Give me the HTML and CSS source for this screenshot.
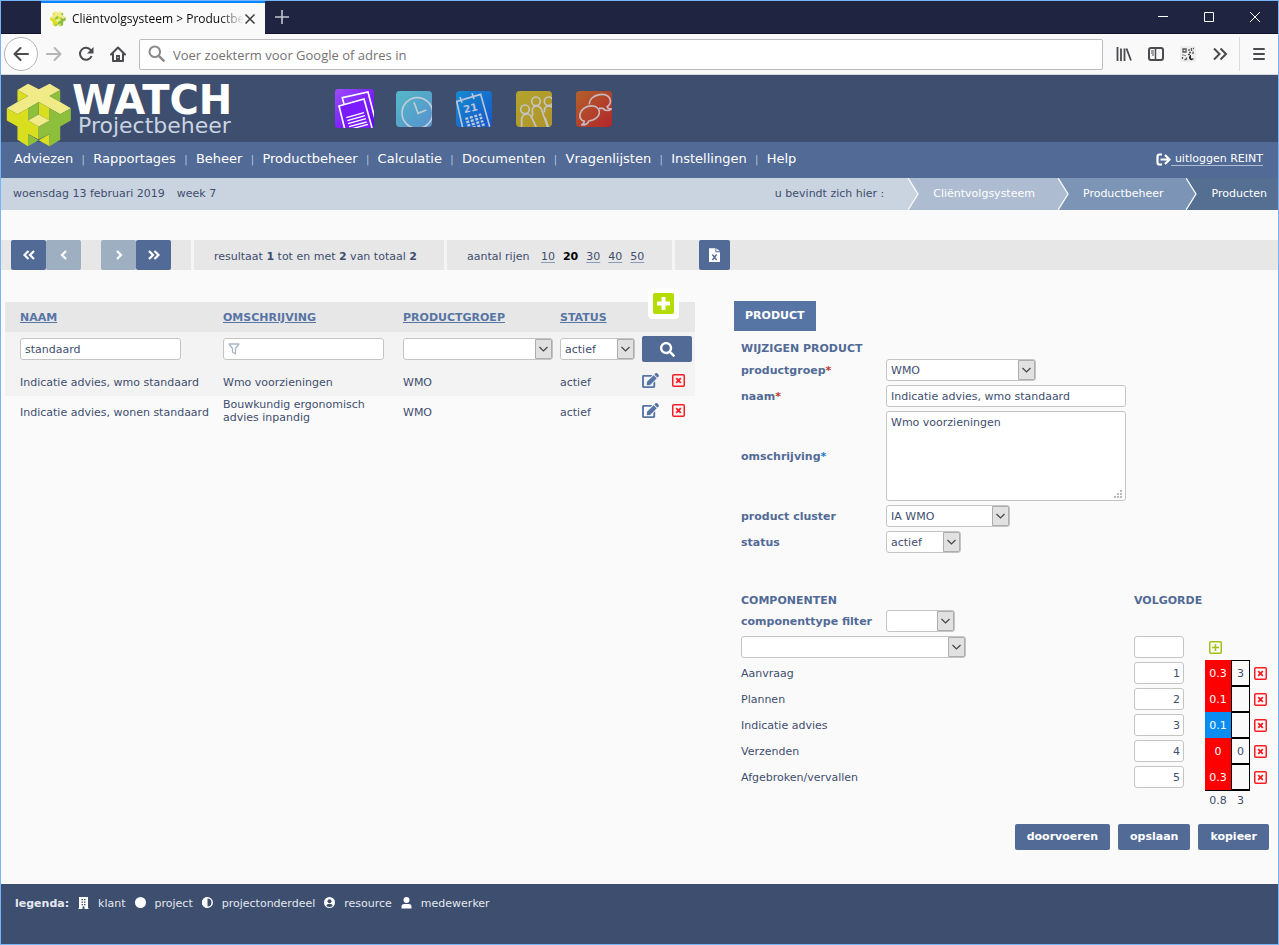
FILE: index.html
```html
<!DOCTYPE html>
<html lang="nl">
<head>
<meta charset="utf-8">
<title>Cliëntvolgsysteem &gt; Productbeheer</title>
<link rel="stylesheet" href="styles.css">
</head>
<body>
<svg class="defs" aria-hidden="true">
  <symbol id="logo" viewBox="18 249 198 196">
    <path fill="#f0eb86" d="M84 251l32.500 17L149 251l32 19-32 18 32 18 32 19-32 18-32-18-32.500-19L84 325l-32 18-32-18 32-19 32-18-32-18z"/>
    <path fill="#d9de1f" d="M52 270l32 18-32 18zM20 325l32 18 32-18v78l0 37-32-20v-40l-32-18zM116 306l33 19v37l-33-18zM84 362l32 18v39l-32-16zM116 422l33-19v37z"/>
    <path fill="#8dbf3c" d="M181 270l-32 18 32 18zM213 325l-32 18-32-18v115l32-20v-40l32-18zM116 306l-32 19v37l32-18zM149 362l-33 18v39l33-16zM116 422l-32-19v37z"/>
    <path fill="#f0eb86" d="M84 362l32-18 33 18-33 18z"/>
  </symbol>
  <symbol id="edit" viewBox="0 0 576 512"><path fill="currentColor" d="M402.600 83.200l90.200 90.200c3.800 3.800 3.800 10 0 13.800L274.400 405.600l-92.800 10.300c-12.400 1.400-22.900-9.100-21.500-21.500l10.300-92.800L388.800 83.200c3.800-3.800 10-3.800 13.800 0zm162-22.900l-48.800-48.800c-15.200-15.200-39.900-15.200-55.200 0l-35.400 35.400c-3.800 3.800-3.800 10 0 13.800l90.200 90.200c3.800 3.800 10 3.800 13.800 0l35.400-35.400c15.200-15.300 15.200-40 0-55.200zM384 346.200V448H64V128h229.800c3.200 0 6.200-1.300 8.500-3.500l40-40c7.600-7.600 2.200-20.500-8.500-20.500H48C21.500 64 0 85.500 0 112v352c0 26.500 21.500 48 48 48h352c26.500 0 48-21.500 48-48V306.200c0-10.700-12.900-16-20.500-8.500l-40 40c-2.200 2.300-3.500 5.300-3.500 8.500z"/></symbol>
  <symbol id="search" viewBox="0 0 512 512"><path fill="currentColor" d="M505 442.700L405.300 343c-4.500-4.500-10.600-7-17-7H372c27.600-35.300 44-79.700 44-128C416 93.100 322.900 0 208 0S0 93.100 0 208s93.100 208 208 208c48.300 0 92.700-16.400 128-44v16.300c0 6.400 2.500 12.500 7 17l99.700 99.700c9.400 9.400 24.600 9.400 33.900 0l28.300-28.300c9.400-9.400 9.400-24.600.1-34zM208 336c-70.700 0-128-57.200-128-128 0-70.700 57.200-128 128-128 70.700 0 128 57.200 128 128 0 70.700-57.200 128-128 128z"/></symbol>
  <symbol id="delete" viewBox="0 0 13 13"><rect x=".75" y=".75" width="11.500" height="11.500" rx="1" fill="none" stroke="currentColor" stroke-width="1.500"/><path d="M4.200 4.200l4.600 4.600M8.800 4.200l-4.600 4.600" stroke="currentColor" stroke-width="1.800"/></symbol>
</svg>

<header class="browser">
  <div class="tabs">
    <div class="tab">
      <svg class="favicon"><use href="#logo"/></svg>
      <span class="tab-title">Cliëntvolgsysteem &gt; Productbe</span>
      <button class="tab-close" aria-label="Tabblad sluiten"><svg width="12" height="12" viewBox="0 0 12 12"><path d="M1.500 1.500l9 9M10.500 1.500l-9 9" stroke="#3c3c40" stroke-width="1.500"/></svg></button>
    </div>
    <button class="tab-new" aria-label="Nieuw tabblad"><svg width="14" height="14" viewBox="0 0 14 14"><path d="M7 0v14M0 7h14" stroke="#c4c5cd" stroke-width="1.600"/></svg></button>
    <div class="window-controls">
      <button aria-label="Minimaliseren"><svg width="12" height="12" viewBox="0 0 12 12"><path d="M1 5.500h10" stroke="#fff"/></svg></button>
      <button aria-label="Maximaliseren"><svg width="12" height="12" viewBox="0 0 12 12"><path d="M1.500 1.500h9v9h-9z" fill="none" stroke="#fff"/></svg></button>
      <button aria-label="Sluiten"><svg width="12" height="12" viewBox="0 0 12 12"><path d="M1 1l10 10M11 1L1 11" stroke="#fff"/></svg></button>
    </div>
  </div>
  <div class="toolbar">
    <button class="back" aria-label="Terug"><svg width="16" height="16" viewBox="0 0 16 16"><path d="M15 8H1.500M7.500 2L1.500 8l6 6" fill="none" stroke="#4a4a4f" stroke-width="2" stroke-linecap="round" stroke-linejoin="round"/></svg></button>
    <button class="tool" aria-label="Vooruit"><svg width="16" height="16" viewBox="0 0 16 16"><path d="M1 8h13.500M8.500 2l6 6-6 6" fill="none" stroke="#b5b5b7" stroke-width="2" stroke-linecap="round" stroke-linejoin="round"/></svg></button>
    <button class="tool" aria-label="Vernieuwen"><svg width="16" height="16" viewBox="0 0 16 16"><path d="M13 4.500A6 6 0 1 0 13.600 10" fill="none" stroke="#4a4a4f" stroke-width="2"/><path d="M15.500 1v6.500H9z" fill="#4a4a4f"/></svg></button>
    <button class="tool" aria-label="Startpagina"><svg width="16" height="16" viewBox="0 0 16 16"><path d="M1 8.500L8 1.500l7 7M3 8v7h10V8" fill="none" stroke="#4a4a4f" stroke-width="2" stroke-linecap="round" stroke-linejoin="round"/><path d="M6 9h4v6H6z" fill="#4a4a4f"/><path d="M7.500 11h1v1h-1z" fill="#fff"/></svg></button>
    <label class="url">
      <svg width="18" height="18" viewBox="0 0 18 18"><circle cx="6.800" cy="6.800" r="5.300" fill="none" stroke="#8a8a8c" stroke-width="2"/><path d="M10.800 10.800l5.600 5.600" stroke="#8a8a8c" stroke-width="2.400"/></svg>
      <input class="url-input" type="text" placeholder="Voer zoekterm voor Google of adres in" aria-label="Adresbalk">
    </label>
    <button class="tool" aria-label="Bibliotheek"><svg width="16" height="16" viewBox="0 0 16 16"><path d="M1.500 1v14M5 2.500V15M8.500 2.500V15M10.500 2.500L15 14.500" stroke="#4a4a4f" stroke-width="1.800"/></svg></button>
    <button class="tool" aria-label="Zijbalk"><svg width="16" height="16" viewBox="0 0 16 16"><rect x="1" y="2" width="14" height="12" rx="2" fill="none" stroke="#4a4a4f" stroke-width="2"/><path d="M7.500 2v12" stroke="#4a4a4f" stroke-width="1.500"/><path d="M3 5h3M3 7h3M4 9h2" stroke="#4a4a4f"/></svg></button>
    <button class="tool" aria-label="QR-code"><svg width="16" height="16" viewBox="0 0 16 16"><path d="M0 0h16v16H0z" fill="#eee"/><path d="M3 3h3v3H3zM2.500 11v2M5 9v1M6.500 11.500v2M9 3v2M9 6.500h2M11.500 2v3M13 5.500V8M2.500 9h1M4.500 13.500h2M13 2.500h1M8 8.500h2" fill="none" stroke="#55555a" stroke-width="1.300"/><path d="M11 9a2.600 2.600 0 1 0 3 3.500h-3z" fill="#222"/></svg></button>
    <button class="tool" aria-label="Meer hulpmiddelen"><svg width="16" height="16" viewBox="0 0 16 16"><path d="M2 2.500L7.500 8 2 13.500M8.500 2.500L14 8l-5.500 5.500" fill="none" stroke="#4a4a4f" stroke-width="2"/></svg></button>
    <button class="tool tool-menu" aria-label="Menu"><svg width="16" height="16" viewBox="0 0 16 16"><path d="M3 3h10M3 8h10M3 13h10" stroke="#4a4a4f" stroke-width="2" stroke-linecap="round"/></svg></button>
  </div>
</header>

<header class="app-header">
  <div class="brand">
    <svg class="brand-logo"><use href="#logo"/></svg>
    <div class="brand-name">WATCH</div>
    <div class="brand-sub">Projectbeheer</div>
  </div>
  <div class="apps">
    <a href="#" class="app app-active" aria-label="Projecten"><svg viewBox="45 42 117 117"><defs><linearGradient id="g1" x2="1" y2="1"><stop offset="0" stop-color="#9b4dfb"/><stop offset=".6" stop-color="#7a1cff"/><stop offset="1" stop-color="#5d00f5"/></linearGradient><clipPath id="c1"><rect x="45" y="42" width="117" height="117" rx="10"/></clipPath></defs><g clip-path="url(#c1)"><path fill="url(#g1)" d="M45 42h117v117H45z"/><g fill="none" stroke="#fff" stroke-width="5"><path d="M72 88l-5-20 77-17 22 85"/><path fill="#7a1cff" d="M75 165L57 93l75-21 26 93"/><path stroke-width="4" d="M79 128l53-15M82 137l53-15M84 146l54-15M87 155l53-14M90 163l54-15"/></g></g></svg></a>
    <a href="#" class="app" aria-label="Uren"><svg viewBox="231 46 108 108"><defs><linearGradient id="g2" x2="1" y2="1"><stop offset="0" stop-color="#54b9c6"/><stop offset="1" stop-color="#5791cf"/></linearGradient><clipPath id="c2"><rect x="231" y="46" width="108" height="108" rx="11"/></clipPath></defs><g clip-path="url(#c2)"><path fill="url(#g2)" d="M231 46h108v108H231z"/><g fill="none" stroke="#bfcbd9" stroke-width="5"><circle cx="295" cy="112" r="46"/><path d="M285 80l12 33 25-10"/></g></g></svg></a>
    <a href="#" class="app" aria-label="Agenda"><svg viewBox="409 46 108 108"><defs><linearGradient id="g3" x2="1" y2="1"><stop offset="0" stop-color="#168bd0"/><stop offset="1" stop-color="#1556c9"/></linearGradient><clipPath id="c3"><rect x="409" y="46" width="108" height="108" rx="11"/></clipPath></defs><g clip-path="url(#c3)"><path fill="url(#g3)" d="M409 46h108v108H409z"/><g fill="none" stroke="#b9c5da" stroke-width="5"><path d="M430 160l-19-83 72-21 29 104M421 64l6 17M457 53l6 17"/><path stroke-width="7" stroke-dasharray="9 5" d="M437 130l48-14M440 140l48-14M443 150l48-14M446 160l52-15"/></g><text x="434" y="113" transform="rotate(-13 434 113)" class="app-day">21</text></g></svg></a>
    <a href="#" class="app" aria-label="Relaties"><svg viewBox="589 46 108 108"><defs><linearGradient id="g4" x2="1" y2="1"><stop offset="0" stop-color="#b3a32d"/><stop offset="1" stop-color="#b0942a"/></linearGradient><clipPath id="c4"><rect x="589" y="46" width="108" height="108" rx="11"/></clipPath></defs><g clip-path="url(#c4)"><path fill="url(#g4)" d="M589 46h108v108H589z"/><g fill="none" stroke="#c3c5c0" stroke-width="5"><circle cx="616" cy="101" r="13"/><circle cx="649" cy="77" r="13"/><circle cx="687" cy="77" r="13"/><path d="M606 160v-31q4-15 18-14 8 1 12 10l16 35M639 122l-1-20q2-11 13-11 9 0 14 9l21 60M674 110l1-12q4-8 12-7 6 0 11 4M676 126l12 34"/></g></g></svg></a>
    <a href="#" class="app" aria-label="Berichten"><svg viewBox="769 46 108 108"><defs><linearGradient id="g5" x2="1" y2="1"><stop offset="0" stop-color="#b3612a"/><stop offset="1" stop-color="#b3262b"/></linearGradient><clipPath id="c5"><rect x="769" y="46" width="108" height="108" rx="11"/></clipPath></defs><g clip-path="url(#c5)"><path fill="url(#g5)" d="M769 46h108v108H769z"/><g fill="none" stroke="#c5b9bd" stroke-width="5" stroke-linejoin="round"><path d="M809 86c-1-15 12-26 30-29 18-3 31 4 33 17 1 9-4 16-10 19 1 4 5 7 13 7-9 7-19 5-25-2l-12 0"/><path d="M786 133c-10-9-6-27 8-36 17-11 39-7 44 7 5 15-10 30-31 32-1 5-6 12-21 12 5-3 8-6 8-12-3 0-6-1-8-3z"/></g></g></svg></a>
  </div>
</header>

<nav class="menu">
  <ul class="menu-list">
    <li><a href="#">Adviezen</a></li><li><a href="#">Rapportages</a></li><li><a href="#">Beheer</a></li><li><a href="#">Productbeheer</a></li><li><a href="#">Calculatie</a></li><li><a href="#">Documenten</a></li><li><a href="#">Vragenlijsten</a></li><li><a href="#">Instellingen</a></li><li><a href="#">Help</a></li>
  </ul>
  <a href="#" class="logout"><svg width="15" height="13" viewBox="0 0 15 13"><path d="M6 1.500H3.500a2 2 0 0 0-2 2v6a2 2 0 0 0 2 2H6M4.500 6.500H13M9 2l4.500 4.500L9 11" fill="none" stroke="#fff" stroke-width="2.200"/></svg><span>&nbsp;uitloggen REINT</span></a>
</nav>

<div class="crumbs">
  <span class="today">woensdag 13 februari 2019</span><span class="week">week 7</span>
  <span class="here">u bevindt zich hier :</span>
  <a href="#" class="crumb crumb-1"><svg width="11" height="32" viewBox="0 0 11 32"><path fill="#cad4e1" d="M0 0l10 16L0 32z"/><path d="M0 0l10 16L0 32" fill="none" stroke="#fafafa" stroke-width="1.300"/></svg><span>Cliëntvolgsysteem</span></a>
  <a href="#" class="crumb crumb-2"><svg width="11" height="32" viewBox="0 0 11 32"><path fill="#adbcd0" d="M0 0l10 16L0 32z"/><path d="M0 0l10 16L0 32" fill="none" stroke="#fafafa" stroke-width="1.300"/></svg><span>Productbeheer</span></a>
  <a href="#" class="crumb crumb-3"><svg width="11" height="32" viewBox="0 0 11 32"><path fill="#7c95b6" d="M0 0l10 16L0 32z"/><path d="M0 0l10 16L0 32" fill="none" stroke="#fafafa" stroke-width="1.300"/></svg><span>Producten</span></a>
</div>

<div class="pager">
  <div class="pager-nav">
    <button class="page-btn" aria-label="Eerste"><svg width="12" height="10" viewBox="0 0 12 10"><path d="M5.500 1l-4 4 4 4M11 1L7 5l4 4" fill="none" stroke="#fff" stroke-width="2.200"/></svg></button><button class="page-btn page-btn-off" aria-label="Vorige"><svg width="12" height="10" viewBox="0 0 12 10"><path d="M8 1L4 5l4 4" fill="none" stroke="#fff" stroke-width="2.200"/></svg></button>
    <span class="pager-gap"></span>
    <button class="page-btn page-btn-off" aria-label="Volgende"><svg width="12" height="10" viewBox="0 0 12 10"><path d="M4 1l4 4-4 4" fill="none" stroke="#fff" stroke-width="2.200"/></svg></button><button class="page-btn" aria-label="Laatste"><svg width="12" height="10" viewBox="0 0 12 10"><path d="M1 1l4 4-4 4M6.500 1l4 4-4 4" fill="none" stroke="#fff" stroke-width="2.200"/></svg></button>
  </div>
  <div class="pager-part pager-result">resultaat <b>1</b> tot en met <b>2</b> van totaal <b>2</b></div>
  <div class="pager-part pager-rows">aantal rijen <a href="#">10</a><b>20</b><a href="#">30</a><a href="#">40</a><a href="#">50</a></div>
  <button class="excel" aria-label="Exporteren naar Excel"><svg width="11" height="14" viewBox="0 0 12 15"><path fill="#fff" d="M0 0h7v4.500h5V15H0zM8 0l4 3.500H8z"/><path d="M3.700 7l4.600 6M8.300 7l-4.600 6" stroke="#526a96" stroke-width="1.500"/></svg></button>
</div>

<main class="main">
  <section class="list">
    <a href="#" class="add" aria-label="Toevoegen"><svg width="21" height="21" viewBox="0 0 21 21"><rect width="21" height="21" rx="2" fill="#b4dc00"/><path d="M10.500 4v13M4 10.500h13" stroke="#fff" stroke-width="4"/></svg></a>
    <table class="products">
      <colgroup><col class="c-name"><col class="c-desc"><col class="c-group"><col class="c-status"><col></colgroup>
      <thead>
        <tr class="head"><th><a href="#">NAAM</a></th><th><a href="#">OMSCHRIJVING</a></th><th><a href="#">PRODUCTGROEP</a></th><th><a href="#">STATUS</a></th><th></th></tr>
        <tr class="filters">
          <td><input class="field w-filter" type="text" value="standaard" aria-label="Filter naam"></td>
          <td><input class="field w-filter funnel" type="text" aria-label="Filter omschrijving"></td>
          <td><select class="field w-group" aria-label="Filter productgroep"><option></option><option>WMO</option></select></td>
          <td><select class="field w-status" aria-label="Filter status"><option>actief</option></select></td>
          <td><button class="search" aria-label="Zoeken"><svg width="15" height="15"><use href="#search"/></svg></button></td>
        </tr>
      </thead>
      <tbody>
        <tr class="odd"><td>Indicatie advies, wmo standaard</td><td>Wmo voorzieningen</td><td>WMO</td><td>actief</td><td><div class="actions"><a href="#" class="edit" aria-label="Wijzigen"><svg width="17" height="15"><use href="#edit"/></svg></a><a href="#" class="delete" aria-label="Verwijderen"><svg width="13" height="13"><use href="#delete"/></svg></a></div></td></tr>
        <tr><td>Indicatie advies, wonen standaard</td><td class="wrap">Bouwkundig ergonomisch advies inpandig</td><td>WMO</td><td>actief</td><td><div class="actions"><a href="#" class="edit" aria-label="Wijzigen"><svg width="17" height="15"><use href="#edit"/></svg></a><a href="#" class="delete" aria-label="Verwijderen"><svg width="13" height="13"><use href="#delete"/></svg></a></div></td></tr>
      </tbody>
    </table>
  </section>

  <form class="detail">
    <h2 class="detail-tab">PRODUCT</h2>
    <div class="detail-body">
      <h3 class="group-title">WIJZIGEN PRODUCT</h3>
      <div class="rows">
        <label for="groep">productgroep<i class="req">*</i></label>
        <select id="groep" class="field w-group"><option>WMO</option></select>
        <label for="naam">naam<i class="req">*</i></label>
        <input id="naam" class="field w-text" type="text" value="Indicatie advies, wmo standaard">
        <label for="oms">omschrijving<i class="opt">*</i></label>
        <textarea id="oms" class="field area">Wmo voorzieningen</textarea>
        <label for="cluster">product cluster</label>
        <select id="cluster" class="field w-cluster"><option>IA WMO</option></select>
        <label for="status">status</label>
        <select id="status" class="field w-status"><option>actief</option></select>
      </div>

      <table class="components">
        <colgroup><col><col class="k-order"><col class="k-a"><col class="k-b"><col class="k-del"></colgroup>
        <thead>
          <tr class="title-row"><th>COMPONENTEN</th><th colspan="4">VOLGORDE</th></tr>
        </thead>
        <tbody>
          <tr><td colspan="5"><div class="filter-row"><label for="ctype">componenttype filter</label><select id="ctype" class="field w-type"><option></option></select></div></td></tr>
          <tr><td><select class="field w-component" aria-label="Component"><option></option></select></td><td><input class="field order" type="text" aria-label="Volgorde"></td><td colspan="3"><a href="#" class="add-small" aria-label="Component toevoegen"><svg width="13" height="13" viewBox="0 0 13 13"><rect x=".75" y=".75" width="11.500" height="11.500" rx="1" fill="none" stroke="#a2c114" stroke-width="1.500"/><path d="M6.500 3v7M3 6.500h7" stroke="#a2c114" stroke-width="1.500"/></svg></a></td></tr>
          <tr><td>Aanvraag</td><td><input class="field order" type="text" value="1" aria-label="Volgorde Aanvraag"></td><td class="hours">0.3</td><td class="count">3</td><td class="del"><a href="#" class="delete" aria-label="Verwijderen"><svg width="13" height="13"><use href="#delete"/></svg></a></td></tr>
          <tr><td>Plannen</td><td><input class="field order" type="text" value="2" aria-label="Volgorde Plannen"></td><td class="hours">0.1</td><td class="count"></td><td class="del"><a href="#" class="delete" aria-label="Verwijderen"><svg width="13" height="13"><use href="#delete"/></svg></a></td></tr>
          <tr><td>Indicatie advies</td><td><input class="field order" type="text" value="3" aria-label="Volgorde Indicatie advies"></td><td class="hours hours-blue">0.1</td><td class="count"></td><td class="del"><a href="#" class="delete" aria-label="Verwijderen"><svg width="13" height="13"><use href="#delete"/></svg></a></td></tr>
          <tr><td>Verzenden</td><td><input class="field order" type="text" value="4" aria-label="Volgorde Verzenden"></td><td class="hours">0</td><td class="count">0</td><td class="del"><a href="#" class="delete" aria-label="Verwijderen"><svg width="13" height="13"><use href="#delete"/></svg></a></td></tr>
          <tr><td>Afgebroken/vervallen</td><td><input class="field order" type="text" value="5" aria-label="Volgorde Afgebroken/vervallen"></td><td class="hours">0.3</td><td class="count"></td><td class="del"><a href="#" class="delete" aria-label="Verwijderen"><svg width="13" height="13"><use href="#delete"/></svg></a></td></tr>
        </tbody>
        <tfoot>
          <tr class="totals"><td></td><td></td><td class="sum sum-line">0.8</td><td class="sum sum-line">3</td><td></td></tr>
        </tfoot>
      </table>
      <div class="buttons"><button type="button" class="btn">doorvoeren</button><button type="button" class="btn">opslaan</button><button type="button" class="btn">kopieer</button></div>
    </div>
  </form>
</main>

<footer class="legend">
  <b>legenda:</b>
  <svg viewBox="0 0 11 12"><path fill="#fff" d="M1 0h9v11h.5v1H6.500V9.500h-2V12H.5v-1H1z"/><path fill="#3e4e6e" d="M3.500 2H5v1.300H3.500zM6 2h1.500v1.300H6zM3.500 4.500H5v1.300H3.500zM6 4.500h1.500v1.300H6zM3.500 7H5v1.300H3.500zM6 7h1.500v1.300H6z"/></svg><span>klant</span>
  <svg viewBox="0 0 11 12"><circle cx="5.500" cy="5.500" r="5.500" fill="#fff"/></svg><span>project</span>
  <svg viewBox="0 0 11 12"><circle cx="5.500" cy="5.500" r="4.700" fill="none" stroke="#fff" stroke-width="1.500"/><path fill="#fff" d="M5.500 0v11a5.500 5.500 0 0 1 0-11z"/></svg><span>projectonderdeel</span>
  <svg viewBox="0 0 11 12"><circle cx="5.500" cy="5.500" r="5.500" fill="#fff"/><circle cx="5.500" cy="4.200" r="2" fill="#3e4e6e"/><path fill="#3e4e6e" d="M2.300 9q.4-2 2-2h2.400q1.600 0 2 2-3.200 2-6.400 0z"/></svg><span>resource</span>
  <svg viewBox="0 0 11 12"><circle cx="5.500" cy="3" r="3" fill="#fff"/><path fill="#fff" d="M.5 11.500V9.800Q.5 7 3.300 7h4.400q2.800 0 2.800 2.800v1.700z"/></svg><span>medewerker</span>
</footer>
</body>
</html>
```
FILE: styles.css
```css
* { box-sizing: border-box; }

body {
  margin: 0;
  min-height: 100vh;
  display: flex;
  flex-direction: column;
  border: 1px solid #75b5f5;
  background: #fafafa;
  color: #3e4e6e;
  font: 11px/13px Verdana, "DejaVu Sans", sans-serif;
}

svg { display: block; flex: none; }
a { color: inherit; }
button { margin: 0; padding: 0; border: 0; background: none; font: inherit; color: inherit; display: flex; align-items: center; justify-content: center; flex: none; }
.defs { position: absolute; width: 0; height: 0; }

/* browser window */
.browser { font-family: "Segoe UI", "Open Sans", sans-serif; }
.tabs { display: flex; height: 33px; background: #1f2440; border-bottom: 1px solid #15112c; padding-left: 40px; }
.tab { display: flex; align-items: center; width: 224px; height: 33px; padding: 0 10px 0 9px; border-top: 2px solid #0a84ff; background: #f9f9fa; color: #0c0c0d; }
.favicon { width: 16px; height: 16px; margin-right: 6px; }
.tab-title { flex: 1; white-space: nowrap; font-size: 12px; line-height: 16px; mask-image: linear-gradient(to left, transparent, #000 24px); }
.tab-new { width: 34px; }
.window-controls { display: flex; margin-left: auto; }
.window-controls button { width: 46px; }
.toolbar { display: flex; align-items: center; height: 41px; padding-left: 3px; background: #f9f9fa; border-bottom: 1px solid #d6d6d8; }
.back { width: 34px; height: 34px; border: 1px solid #b5b5b7; border-radius: 50%; background: #fff; }
.tool { width: 32px; height: 34px; }
.tool-menu { width: 39px; margin-left: 3px; border-left: 1px solid #dcdcdd; }
.url { display: flex; align-items: center; flex: 1; height: 31px; margin: 0 5px; padding: 0 8px; gap: 7px; border: 1px solid #bcbcbe; border-radius: 2px; background: #fff; }
.url-input { flex: 1; border: 0; padding: 2px 0 0; background: none; font: 13px/18px "Segoe UI", "Open Sans", sans-serif; }
.url-input::placeholder { color: #737374; }

/* application header */
.app-header { display: flex; height: 67px; background: #3e4e6e; }
.brand { position: relative; width: 334px; padding: 6px 0 0 71px; white-space: nowrap; }
.brand-logo { position: absolute; left: 5px; top: 8px; width: 66px; height: 65px; }
.brand-name { color: #fff; font-size: 40px; line-height: 38px; font-weight: bold; }
.brand-sub { margin-left: 6px; color: #cad4e1; font-size: 22px; line-height: 14px; }
.apps { display: flex; align-items: center; gap: 24px; }
.app svg { width: 36px; height: 36px; }
.app-active { margin-right: -2px; }
.app-active svg { width: 39px; height: 39px; }
.app-day { fill: #b9c5da; font-size: 31px; font-weight: bold; }

.menu { display: flex; align-items: center; justify-content: space-between; height: 36px; padding: 0 15px 2px 13px; background: #526a96; color: #fff; }
.menu-list { display: flex; margin: 0; padding: 0; list-style: none; font-size: 13px; line-height: 16px; }
.menu-list a { text-decoration: none; }
.menu-list li + li::before { content: "|"; display: inline-block; width: 20px; text-align: center; font-size: 10px; color: #b8c6dc; }
.logout { display: flex; align-items: center; text-decoration: none; }
.logout span { border-bottom: 1px solid #adbcd0; }

.crumbs { display: flex; align-items: center; height: 32px; padding-left: 12px; background: #cad4e1; }
.crumbs > span, .crumb span { padding-bottom: 2px; }
.week { margin-left: 12px; }
.here { margin: 0 24px 0 auto; }
.crumb { display: flex; align-items: center; color: #fff; text-decoration: none; }
.crumb span { padding-left: 14px; padding-right: 23px; }
.crumb-1 { background: #adbcd0; }
.crumb-2 { background: #7c95b6; }
.crumb-3 { background: #546f92; }
.crumb-3 span { padding-right: 11px; }

/* result pager */
.pager { display: flex; height: 30px; margin-top: 30px; background: #e7e7e7; }
.pager-nav { display: flex; padding: 0 20px 0 10px; }
.page-btn { width: 35px; background: #526a96; border-radius: 2px; }
.page-btn-off { background: #9eafc1; }
.pager-gap { width: 20px; }
.pager-part { display: flex; align-items: center; padding: 2px 0 0 20px; border-left: 3px solid #f5f5f5; white-space: pre; }
.pager-result { width: 253px; }
.pager-rows { width: 231px; border-right: 3px solid #f5f5f5; }
.pager-rows a, .pager-rows b { margin-left: 8px; }
.pager-rows a { text-decoration: underline; text-underline-offset: 2px; text-decoration-color: #8a9ab5; }
.pager-rows b { color: #000; }
.excel { width: 31px; margin-left: 24px; background: #526a96; border-radius: 2px; }

.main { flex: 1; display: grid; grid-template-columns: 690fr 540fr; gap: 39px; align-items: start; padding: 31px 4px; }

/* form fields */
.field { display: block; height: 22px; margin: 0; padding: 1px 4px; border: 1px solid #c4c4c4; border-radius: 3px; background-color: #fff; color: #3e4e6e; font: inherit; }
select.field { appearance: none; padding-right: 20px; background-repeat: no-repeat; background-position: right top; background-image: url("data:image/svg+xml,%3Csvg xmlns='http://www.w3.org/2000/svg' width='17' height='20'%3E%3Cpath d='M.5.5h16v19H.5z' fill='%23e1e1e1' stroke='%23adadad'/%3E%3Cpath d='M4.500 8l4 4 4-4' fill='none' stroke='%23444' stroke-width='1.200'/%3E%3C/svg%3E"); }
.w-filter { width: 161px; }
.w-group { width: 150px; }
.w-status { width: 75px; }
.w-cluster { width: 124px; }
.w-type { width: 69px; }
.w-component { width: 225px; }
.w-text { width: 240px; }
.funnel { background-repeat: no-repeat; background-position: 4px 4px; background-image: url("data:image/svg+xml,%3Csvg xmlns='http://www.w3.org/2000/svg' width='12' height='12'%3E%3Cpath d='M1 1h10L7.500 5.500v5.500l-3-2V5.500z' fill='none' stroke='%23a9b6c8' stroke-width='1.300' stroke-linejoin='round'/%3E%3C/svg%3E"); }
.area { width: 240px; height: 90px; padding: 4px; resize: both; }
.area::-webkit-resizer { background: url("data:image/svg+xml,%3Csvg xmlns='http://www.w3.org/2000/svg' width='15' height='15'%3E%3Cpath d='M10 5h2v2h-2zM7 8h2v2H7zM10 8h2v2h-2zM4 11h2v2H4zM7 11h2v2H7zM10 11h2v2h-2z' fill='%23b9b9b9'/%3E%3C/svg%3E") no-repeat; }

/* product list */
.list { position: relative; margin-top: 1px; }
.add { position: absolute; right: 16px; top: -14px; padding: 5px; border-radius: 4px; background: #fff; }
table { width: 100%; border-collapse: collapse; table-layout: fixed; }
th, td { padding: 0; text-align: left; }
.products th, .products td { padding-left: 3px; white-space: nowrap; }
.products th:first-child, .products td:first-child { padding-left: 15px; }
.products tbody td { padding-top: 2px; }
.products .wrap { padding-top: 0; white-space: normal; }
.products tr { height: 30px; }
.products .head { background: #e7e7e7; color: #5775a4; }
.products .filters { height: 34px; }
.filters, .odd { background: #f3f3f3; }
.c-name { width: 215px; }
.c-desc { width: 180px; }
.c-group { width: 157px; }
.c-status { width: 82px; }
.search { width: 50px; height: 26px; border-radius: 2px; background: #526a96; color: #fff; }
.actions { display: flex; align-items: center; gap: 13px; padding-bottom: 3px; }
.edit { color: #5775a4; }
.delete { color: #fa1e23; }

/* product form */
.detail-tab { display: inline-block; margin: 0 0 8px; padding: 0 11px; background: #5775a4; color: #fff; font-size: 11px; line-height: 30px; }
.detail-body { padding-left: 7px; }
.group-title { margin: 0; font-size: 11px; line-height: 20px; color: #526a96; }
.rows { display: grid; grid-template-columns: 145px 1fr; gap: 4px 0; align-items: center; }
.rows label, .filter-row label { color: #526a96; font-weight: bold; }
.req, .opt { font-style: normal; color: #c0392b; }
.opt { color: #1e7fc4; }
.components { margin-top: 39px; }
.components tr { height: 26px; }
.components .title-row { height: 16px; color: #526a96; }
.k-order { width: 71px; }
.k-a { width: 26px; }
.k-b { width: 19px; }
.k-del { width: 24px; }
.filter-row { display: flex; align-items: center; }
.filter-row label { width: 145px; }
.order { width: 50px; padding-right: 3px; text-align: right; }
.add-small { display: block; padding-left: 4px; }
.hours, .count, .sum { text-align: center; }
.hours { background: #f00; color: #fff; }
.hours-blue { background: #0a8cf0; }
.count { box-shadow: inset 0 0 0 1px #000; }
.sum-line { box-shadow: inset 0 1px 0 #000; }
.del { padding-left: 4px; }
.components .totals { height: 20px; }
.buttons { display: flex; justify-content: flex-end; gap: 8px; margin-top: 14px; padding-right: 5px; }
.btn { height: 26px; padding: 0 12px 2px; border-radius: 2px; background: #526a96; color: #fff; font-weight: bold; }

.legend { display: flex; align-items: flex-start; gap: 9px; min-height: 60px; padding: 13px 14px; background: #3e4e6e; color: #e3e8f0; }
.legend svg { width: 11px; height: 12px; }
```
